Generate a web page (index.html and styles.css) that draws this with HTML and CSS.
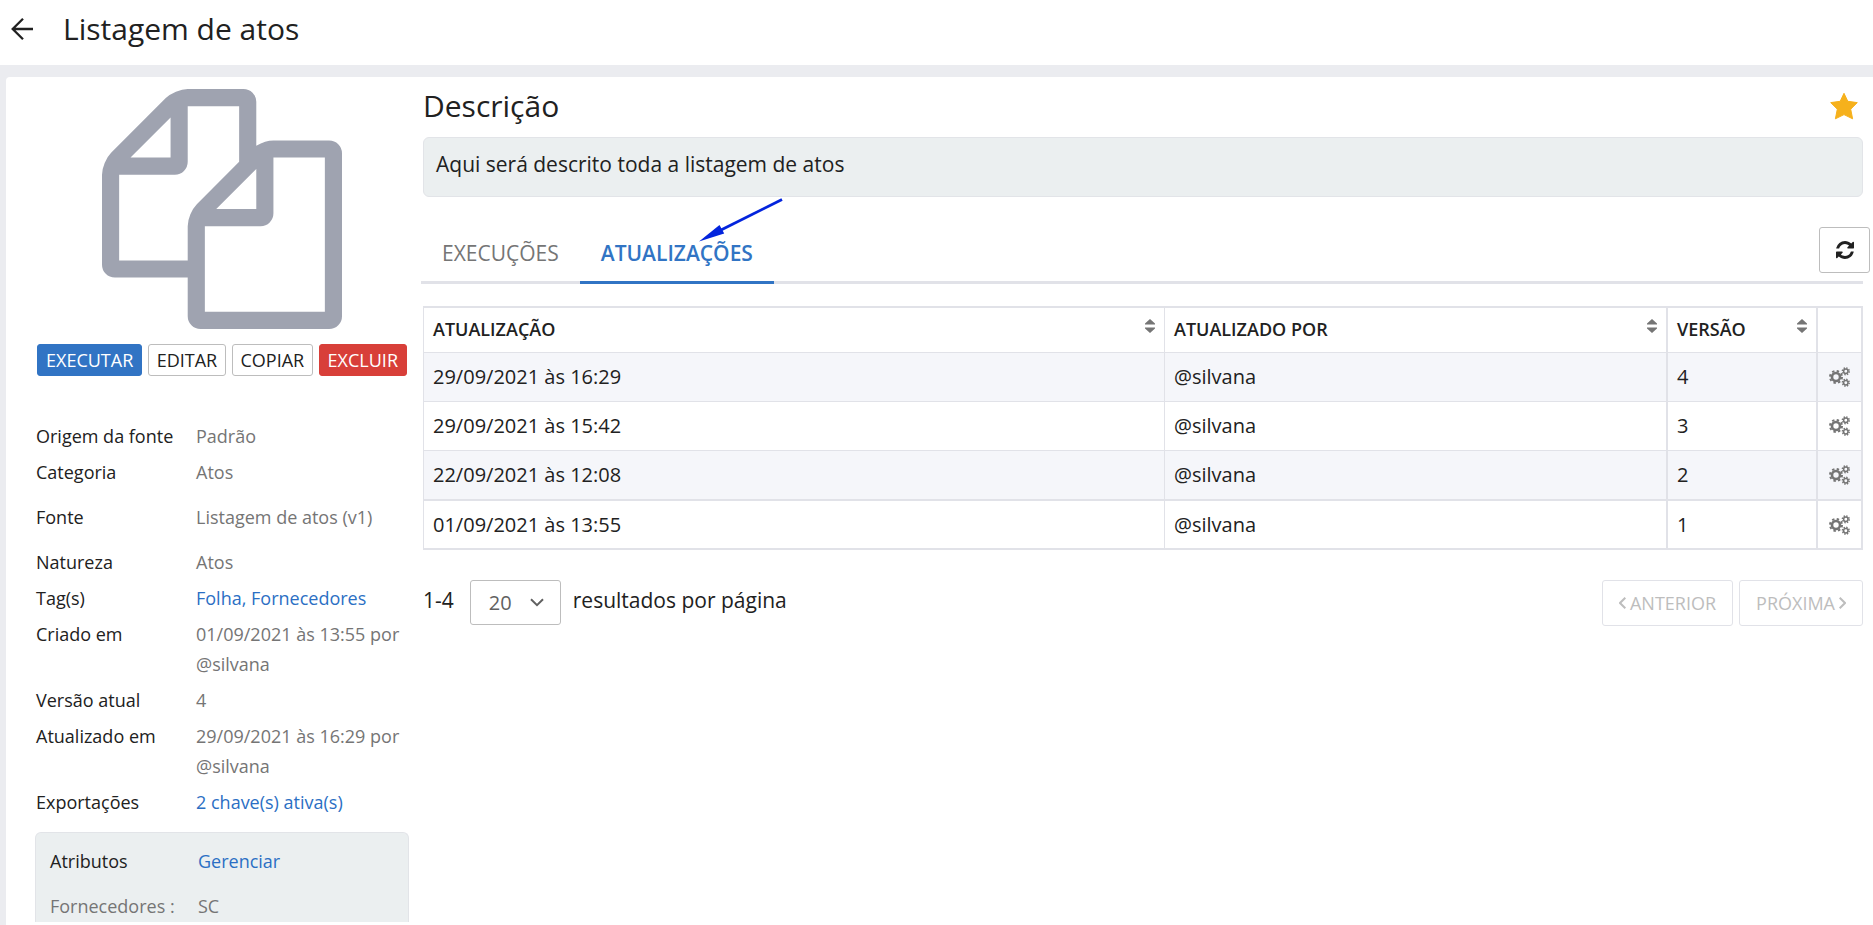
FILE: index.html
```
<!DOCTYPE html>
<html lang="pt-BR">
<head>
<meta charset="utf-8">
<title>Listagem de atos</title>
<link rel="stylesheet" href="styles.css">
</head>
<body>
<svg class="defs" aria-hidden="true">
  <symbol id="gears" viewBox="0 0 21 20">
    <g fill="none" stroke="currentColor">
      <circle cx="7" cy="10" r="4" stroke-width="2.6"/>
      <circle cx="7" cy="10" r="6" stroke-width="2" stroke-dasharray="2.4 2.312"/>
      <circle cx="16.8" cy="4.300" r="2.2" stroke-width="1.5"/>
      <circle cx="16.8" cy="4.300" r="3.4" stroke-width="1.5" stroke-dasharray="1.4 1.27"/>
      <circle cx="16.8" cy="15.700" r="2.2" stroke-width="1.5"/>
      <circle cx="16.8" cy="15.700" r="3.4" stroke-width="1.5" stroke-dasharray="1.4 1.27"/>
    </g>
  </symbol>
  <symbol id="sort" viewBox="0 0 10 14">
    <path fill="currentColor" d="M5 0L10 4.600V5.600H0V4.600ZM0 8.400H10V9.400L5 14L0 9.400Z"/>
  </symbol>
</svg>

<header class="topbar">
  <button class="back" type="button" aria-label="Voltar">
    <svg width="24" height="24" viewBox="0 0 24 24" fill="none" stroke="currentColor" stroke-width="2.300"><path d="M23 12H2.500M13 1.700L2.700 12L13 22.300"/></svg>
  </button>
  <h1 class="title">Listagem de atos</h1>
</header>

<main class="panel">
  <aside class="sidebar">
    <svg class="cover" viewBox="0 0 1792 1792" aria-hidden="true"><path d="M1696 384q40 0 68 28t28 68v1216q0 40-28 68t-68 28h-960q-40 0-68-28t-28-68v-288h-544q-40 0-68-28t-28-68v-672q0-40 20-88t48-76l408-408q28-28 76-48t88-20h416q40 0 68 28t28 68v328q68-40 128-40h416zm-544 213l-299 299h299v-299zm-640-384l-299 299h299v-299zm196 647l316-316v-416h-384v416q0 40-28 68t-68 28h-416v640h512v-256q0-40 20-88t48-76zm956 804v-1152h-384v416q0 40-28 68t-68 28h-416v640h896z"/></svg>
    <div class="actions">
      <button class="btn btn-primary" type="button">EXECUTAR</button>
      <button class="btn" type="button">EDITAR</button>
      <button class="btn" type="button">COPIAR</button>
      <button class="btn btn-danger" type="button">EXCLUIR</button>
    </div>
    <dl class="details">
      <div class="detail"><dt>Origem da fonte</dt><dd>Padrão</dd></div>
      <div class="detail"><dt>Categoria</dt><dd>Atos</dd></div>
      <div class="detail spaced"><dt>Fonte</dt><dd>Listagem de atos (v1)</dd></div>
      <div class="detail"><dt>Natureza</dt><dd>Atos</dd></div>
      <div class="detail"><dt>Tag(s)</dt><dd><a href="#">Folha, Fornecedores</a></dd></div>
      <div class="detail"><dt>Criado em</dt><dd>01/09/2021 às 13:55 por @silvana</dd></div>
      <div class="detail"><dt>Versão atual</dt><dd>4</dd></div>
      <div class="detail"><dt>Atualizado em</dt><dd>29/09/2021 às 16:29 por @silvana</dd></div>
      <div class="detail"><dt>Exportações</dt><dd><a href="#">2 chave(s) ativa(s)</a></dd></div>
    </dl>
    <dl class="attributes">
      <div class="detail"><dt>Atributos</dt><dd><a href="#">Gerenciar</a></dd></div>
      <div class="detail muted"><dt>Fornecedores :</dt><dd>SC</dd></div>
    </dl>
  </aside>

  <section class="content">
    <div class="heading">
      <h2 class="subtitle">Descrição</h2>
      <button class="star" type="button" aria-label="Favorito">
        <svg width="28" height="28" viewBox="0 0 28 28"><path fill="#f6b11c" stroke="#f6b11c" stroke-linejoin="round" d="M14 1.300L17.800 9.300L27.300 10.600L20.700 17.200L22.600 26.800L14 22.600L5.400 26.800L7.300 17.200L.7 10.600L10.200 9.300Z"/></svg>
      </button>
    </div>
    <p class="description">Aqui será descrito toda a listagem de atos</p>

    <div class="tabs" role="tablist">
      <button class="tab" type="button" role="tab" aria-selected="false">EXECUÇÕES</button>
      <button class="tab active" type="button" role="tab" aria-selected="true">ATUALIZAÇÕES
        <svg class="pointer" width="86" height="46" viewBox="0 0 86 46" aria-hidden="true"><g fill="#0324dd"><path d="M0 44.500L20.500 28L25.200 36.500Z"/><path d="M83 2.500L22 33" stroke="#0324dd" stroke-width="2.800"/></g></svg>
      </button>
      <button class="refresh" type="button" aria-label="Atualizar">
        <svg width="18" height="18" viewBox="0 128 1536 1536" fill="currentColor"><path d="M1511 1056q0 5-1 7-64 268-268 434.500t-478 166.500q-146 0-282.500-55t-243.500-157l-129 129q-19 19-45 19t-45-19-19-45v-448q0-26 19-45t45-19h448q26 0 45 19t19 45-19 45l-137 137q71 66 161 102t187 36q134 0 250-65t186-179q11-17 53-117 8-23 30-23h192q13 0 22.500 9.500t9.500 22.500zm25-800v448q0 26-19 45t-45 19h-448q-26 0-45-19t-19-45 19-45l138-138q-148-137-349-137-134 0-250 65t-186 179q-11 17-53 117-8 23-30 23h-199q-13 0-22.500-9.500t-9.500-22.500v-7q65-268 270-434.500t480-166.500q146 0 284 55.500t245 156.500l130-129q19-19 45-19t45 19 19 45z"/></svg>
      </button>
    </div>

    <table class="grid">
      <colgroup><col class="c-date"><col class="c-user"><col class="c-version"><col class="c-tools"></colgroup>
      <thead>
        <tr>
          <th scope="col"><div class="sortable">ATUALIZAÇÃO<svg class="sort"><use href="#sort"/></svg></div></th>
          <th scope="col"><div class="sortable">ATUALIZADO POR<svg class="sort"><use href="#sort"/></svg></div></th>
          <th scope="col"><div class="sortable">VERSÃO<svg class="sort"><use href="#sort"/></svg></div></th>
          <th></th>
        </tr>
      </thead>
      <tbody>
        <tr><td>29/09/2021 às 16:29</td><td>@silvana</td><td>4</td><td><button class="gear" type="button" aria-label="Opções"><svg width="21" height="20"><use href="#gears"/></svg></button></td></tr>
        <tr><td>29/09/2021 às 15:42</td><td>@silvana</td><td>3</td><td><button class="gear" type="button" aria-label="Opções"><svg width="21" height="20"><use href="#gears"/></svg></button></td></tr>
        <tr><td>22/09/2021 às 12:08</td><td>@silvana</td><td>2</td><td><button class="gear" type="button" aria-label="Opções"><svg width="21" height="20"><use href="#gears"/></svg></button></td></tr>
        <tr><td>01/09/2021 às 13:55</td><td>@silvana</td><td>1</td><td><button class="gear" type="button" aria-label="Opções"><svg width="21" height="20"><use href="#gears"/></svg></button></td></tr>
      </tbody>
    </table>

    <div class="pager">
      <span>1-4</span>
      <select class="size" id="size"><option>20</option></select>
      <label for="size">resultados por página</label>
      <div class="pages">
        <button class="page" type="button" disabled><svg width="7" height="12" viewBox="0 0 7 12"><path d="M6.300 .7L1 6L6.300 11.300"/></svg>ANTERIOR</button>
        <button class="page" type="button" disabled>PRÓXIMA<svg width="7" height="12" viewBox="0 0 7 12"><path d="M.7 .7L6 6L.7 11.300"/></svg></button>
      </div>
    </div>
  </section>
</main>
</body>
</html>
```

FILE: styles.css
```
* { box-sizing: border-box; }

body {
  margin: 0;
  min-height: 100vh;
  display: flex;
  flex-direction: column;
  background: #ebecf0;
  color: #212121;
  font-family: "Open Sans", "Noto Sans", sans-serif;
  font-size: 20px;
}

button, select { font: inherit; color: inherit; }
h1, h2, p, dl, dd { margin: 0; }
h1, h2 { font-weight: 400; }
a { color: #2b6fc4; text-decoration: none; }
svg { display: block; flex: none; }
.defs { position: absolute; width: 0; height: 0; }

.topbar {
  display: flex;
  align-items: center;
  gap: 29px;
  height: 65px;
  padding: 0 10px 8px;
  background: #fff;
}
.back, .star, .gear {
  padding: 0;
  border: 0;
  background: none;
}
.title { font-size: 30px; line-height: 40px; }

.panel {
  flex: 1;
  display: flex;
  margin: 12px 0 0 6px;
  padding: 12px 10px 3px 29px;
  border-radius: 4px 0 0 0;
  background: #fff;
}

.sidebar {
  display: flex;
  flex-direction: column;
  flex: none;
  width: 374px;
  margin-right: 14px;
}
.cover {
  width: 240px;
  height: 240px;
  margin-left: 67px;
  fill: #9fa3b0;
}
.actions {
  display: flex;
  justify-content: space-between;
  margin: 15px 2px 45px;
}
.btn {
  height: 32px;
  padding: 0 8px;
  border: 1px solid #bdbdbd;
  border-radius: 3px;
  background: #fff;
  font-size: 18px;
  line-height: 30px;
}
.btn-primary { background: #3174c4; border-color: #3174c4; color: #fff; }
.btn-danger { background: #d83f39; border-color: #d83f39; color: #fff; }

.details { padding-left: 1px; }
.detail {
  display: flex;
  margin-bottom: 6px;
  font-size: 18px;
  line-height: 30px;
}
.detail dt { flex: none; width: 160px; }
.detail dd { flex: 1; color: #757575; }
.spaced { margin: 15px 0; }
.attributes {
  flex: 1;
  margin-top: 9px;
  padding: 13px 14px 0;
  border: 1px solid #e2e4e8;
  border-bottom: 0;
  border-radius: 6px 6px 0 0;
  background: #ebeff0;
}
.attributes .detail { margin-bottom: 15px; }
.attributes .detail:last-child { margin-bottom: 0; }
.attributes dt { width: 148px; }
.muted { color: #757575; }

.content { flex: 1; min-width: 0; }
.heading {
  display: flex;
  justify-content: space-between;
  align-items: center;
  height: 34px;
  padding-right: 5px;
}
.subtitle { font-size: 30px; line-height: 34px; }
.description {
  height: 60px;
  margin: 14px 0 28px;
  padding: 11px 12px;
  border: 1px solid #e2e4e8;
  border-radius: 6px;
  background: #ebeff0;
  font-size: 21px;
  line-height: 30px;
}

.tabs {
  display: flex;
  align-items: flex-end;
  height: 59px;
  margin-left: -2px;
  border-bottom: 3px solid #e1e2e8;
}
.tab {
  position: relative;
  height: 59px;
  margin-bottom: -3px;
  padding: 0 21px;
  border: 0;
  border-bottom: 3px solid transparent;
  background: none;
  color: #757575;
  font-size: 21px;
  line-height: 30px;
}
.tab.active {
  border-color: #3174c4;
  color: #3174c4;
  font-weight: 600;
}
.pointer { position: absolute; left: 119px; top: -28px; }
.refresh {
  display: flex;
  align-items: center;
  justify-content: center;
  width: 51px;
  height: 46px;
  margin: 0 -7px 8px auto;
  border: 1px solid #bdbdbd;
  border-radius: 3px;
  background: #fff;
}

.grid {
  width: 100%;
  margin-top: 22px;
  border: 2px solid #e1e2e8;
  border-left-width: 1px;
  border-collapse: separate;
  border-spacing: 0;
  table-layout: fixed;
}
.c-user { width: 503px; }
.c-version { width: 150px; }
.c-tools { width: 43px; }
.grid th, .grid td {
  height: 49px;
  padding: 0 9px;
  border-bottom: 1px solid #e1e2e8;
  border-right: 2px solid #e1e2e8;
  text-align: left;
  line-height: 30px;
}
.grid th:first-child, .grid td:first-child { border-right-width: 1px; }
.grid th:last-child, .grid td:last-child { border-right: 0; padding: 0 0 0 11px; }
.grid th { height: 45px; padding-bottom: 2px; font-size: 18px; font-weight: 600; }
.grid tbody tr:nth-child(odd) { background: #f5f6fa; }
.grid tbody tr:nth-child(3) td { height: 50px; border-bottom-width: 2px; }
.grid tbody tr:last-child td { height: 47px; border-bottom: 0; }
.sortable { display: flex; justify-content: space-between; }
.sort { width: 10px; height: 14px; margin-top: 5px; color: #757575; }
.gear { display: block; color: #757575; }

.pager {
  display: flex;
  align-items: flex-start;
  margin-top: 30px;
  font-size: 21px;
  line-height: 40px;
}
.size {
  width: 91px;
  height: 45px;
  margin: 0 12px 0 16px;
  padding: 0 18px;
  border: 1px solid #bdbdbd;
  border-radius: 3px;
  appearance: none;
  color: #616161;
  font-size: 20px;
  background: #fff url("data:image/svg+xml,%3Csvg xmlns='http://www.w3.org/2000/svg' width='14' height='9' fill='none' stroke='%23616161' stroke-width='2'%3E%3Cpath d='M1 1.200L7 7.200L13 1.200'/%3E%3C/svg%3E") no-repeat right 16px center;
}
.pages { display: flex; gap: 6px; margin-left: auto; }
.page {
  display: flex;
  align-items: center;
  gap: 4px;
  height: 46px;
  padding: 0 16px;
  border: 1px solid #e1e2e8;
  border-radius: 3px;
  background: #fff;
  color: #bdbdbd;
  font-size: 18px;
}
.page svg { fill: none; stroke: currentColor; stroke-width: 2; }
```
